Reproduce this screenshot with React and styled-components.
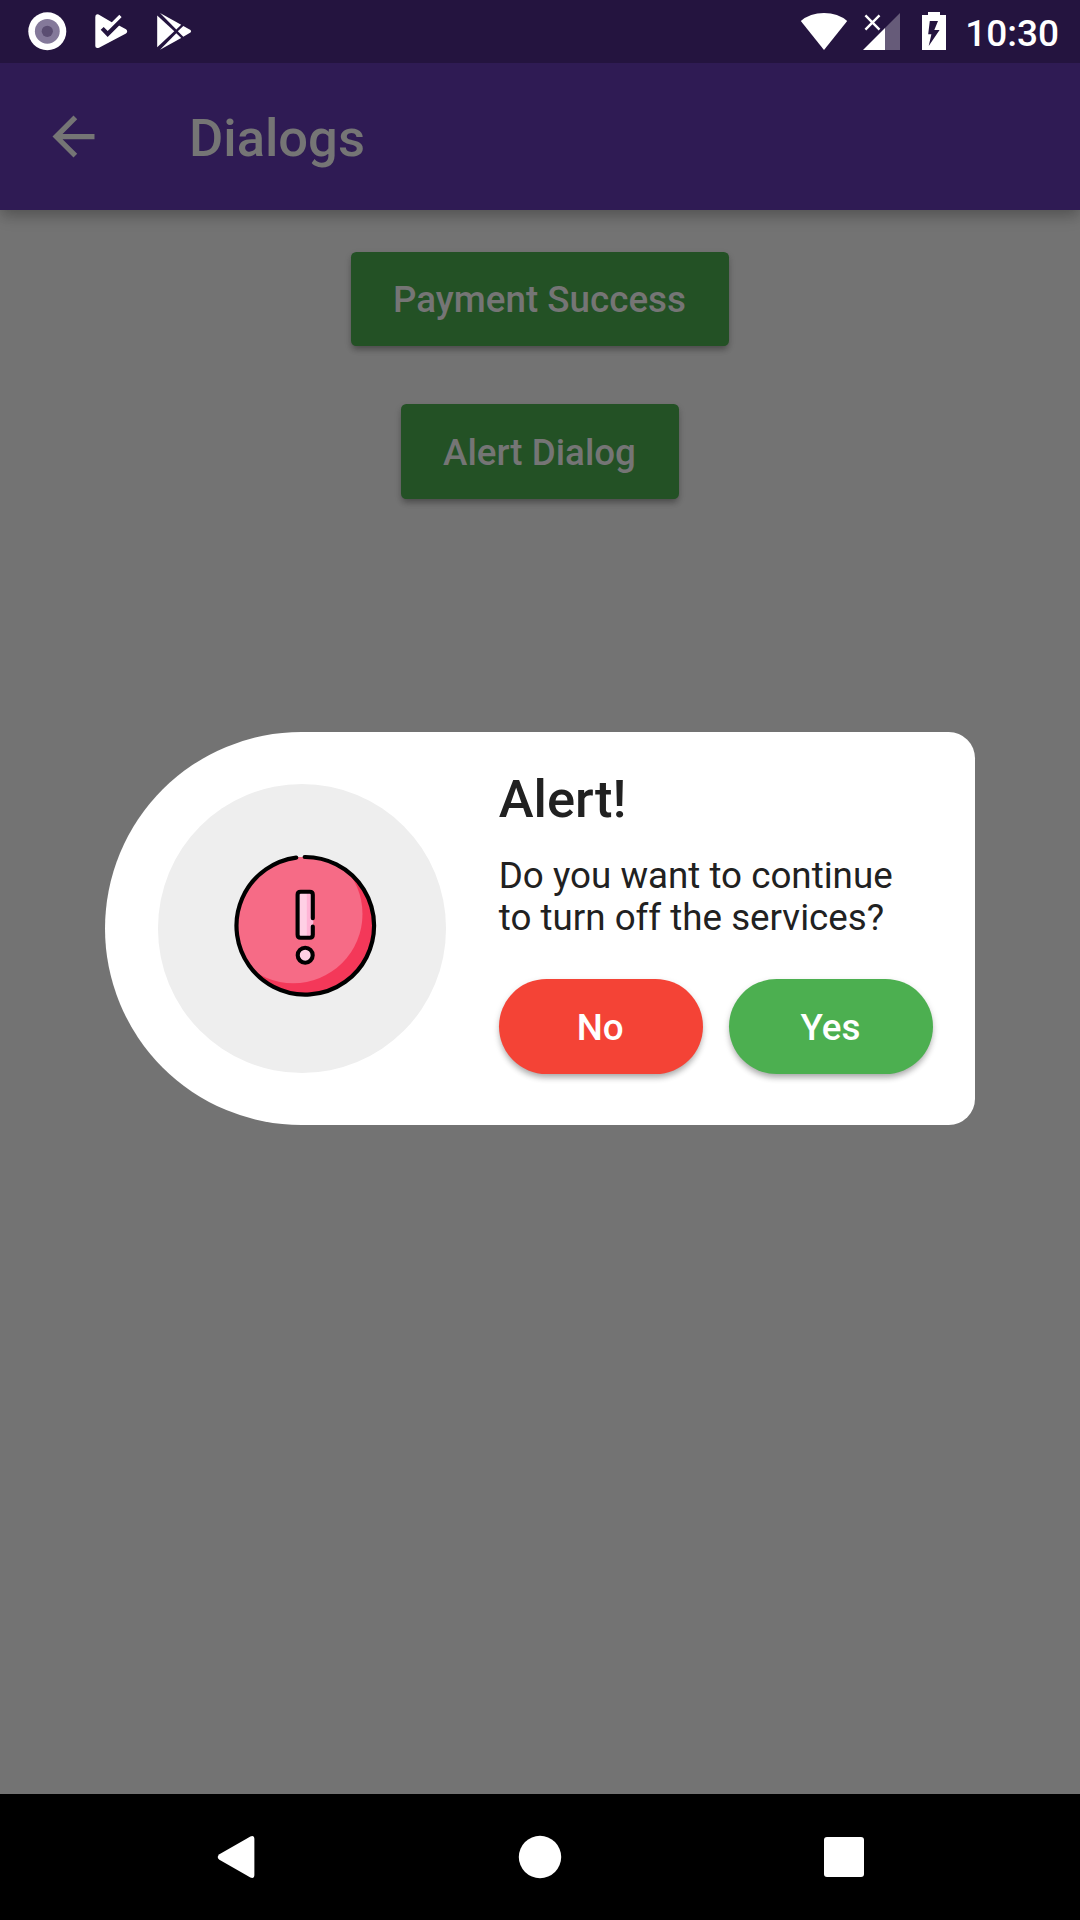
import React from "react";
import styled, { createGlobalStyle } from "styled-components";

const GlobalStyle = createGlobalStyle`
  html, body { margin: 0; padding: 0; }
  *, *::before, *::after { box-sizing: border-box; }
`;

const Screen = styled.div`
  position: relative;
  display: flex;
  flex-direction: column;
  width: 1080px;
  height: 1920px;
  overflow: hidden;
  background: #737373;
  font-family: Roboto, "Liberation Sans", sans-serif;
`;

const StatusBar = styled.div`
  display: flex;
  align-items: center;
  flex: none;
  height: 63px;
  padding: 0 21px 0 28px;
  background: #24143f;
  z-index: 1;
`;

const StatusIcon = styled.svg`
  flex: none;
  display: block;
  width: ${(p) => p.$w}px;
  height: 63px;
  margin-right: ${(p) => p.$gap || 0}px;
`;

const Spacer = styled.div`
  flex: 1;
`;

const Clock = styled.span`
  color: #fff;
  font-size: 37px;
  font-weight: 500;
  line-height: 63px;
  padding-top: 2px;
  height: 63px;
`;

const AppBar = styled.header`
  display: flex;
  align-items: center;
  flex: none;
  height: 147px;
  padding-left: 42px;
  gap: 84px;
  background: #2f1b54;
  box-shadow: 0 9px 14px -2px rgba(0, 0, 0, 0.18), 0 3px 12px rgba(0, 0, 0, 0.12);
`;

const BackIcon = styled.svg`
  width: 63px;
  height: 63px;
`;

const Title = styled.h1`
  margin: 0;
  padding-top: 3px;
  color: #757575;
  font-size: 52.5px;
  font-weight: 500;
  line-height: 62px;
`;

const Body = styled.main`
  display: flex;
  flex-direction: column;
  align-items: center;
  flex: 1;
  gap: 58px;
  padding-top: 42px;
`;

const RaisedButton = styled.button`
  height: 94px;
  padding: 0 1px 0 0;
  width: ${(p) => p.$width}px;
  border: 0;
  border-radius: 5.25px;
  background: #235125;
  color: #757575;
  font: 500 36.75px/43px Roboto, "Liberation Sans", sans-serif;
  box-shadow: 0 5px 6px -2px rgba(0, 0, 0, 0.24), 0 3px 7px rgba(0, 0, 0, 0.16);

  &:last-child {
    height: 95px;
    padding-top: 1px;
  }
`;

const DialogLayer = styled.div`
  position: absolute;
  inset: 63px 0 126px;
  display: flex;
  align-items: center;
  justify-content: center;
`;

const Dialog = styled.section`
  display: flex;
  align-items: center;
  width: 870px;
  height: 393.75px;
  padding: 0 42px 0 52.5px;
  gap: 52.5px;
  background: #fff;
  border-radius: 196.875px 26.25px 26.25px 196.875px;
`;

const IconDisc = styled.div`
  display: flex;
  align-items: center;
  justify-content: center;
  flex: none;
  width: 288.75px;
  height: 288.75px;
  border-radius: 50%;
  background: #eee;
`;

const AlertSvg = styled.svg`
  width: 170px;
  height: 170px;
`;

const Content = styled.div`
  display: flex;
  flex-direction: column;
  align-self: flex-start;
  flex: 1;
  padding-top: 36.4px;
  color: #212121;
`;

const Heading = styled.h2`
  margin: 0 0 25px;
  font-size: 52.5px;
  font-weight: 500;
  line-height: 62px;
`;

const Message = styled.p`
  margin: 0 0 40.4px;
  font-size: 36.75px;
  line-height: 42px;
  white-space: nowrap;
`;

const Actions = styled.div`
  display: flex;
  gap: 26.25px;
`;

const PillButton = styled.button`
  flex: 1;
  height: 94.5px;
  padding: 1px 1px 0 0;
  border: 0;
  border-radius: 48px;
  background: ${(p) => p.$color};
  color: #fff;
  font: 500 36.75px/43px Roboto, "Liberation Sans", sans-serif;
  box-shadow: 0 5px 6px -2px rgba(0, 0, 0, 0.24), 0 3px 7px rgba(0, 0, 0, 0.16);
`;

const NavBar = styled.nav`
  display: flex;
  align-items: center;
  justify-content: center;
  flex: none;
  gap: 240px;
  height: 126px;
  background: #000;
`;

const NavIcon = styled.svg`
  width: 64px;
  height: 64px;
`;

export default function App() {
  return (
    <Screen>
      <GlobalStyle />
      <StatusBar>
        <StatusIcon $w={39} $gap={27} viewBox="28 0 39 63">
          <circle cx="47.3" cy="31.3" r="19" fill="#fff" />
          <circle cx="47.3" cy="31.3" r="12.4" fill="#84799a" />
          <circle cx="47.3" cy="31.3" r="5.6" fill="#5b4e72" />
        </StatusIcon>
        <StatusIcon $w={36} $gap={26} viewBox="94 0 36 63">
          <path
            d="M95.3 17Q95.3 13.4 98.6 14.6L111.8 22.2L119.3 14.8L122 17.4L119 25.6L126 29.2Q128.4 31.4 126 33.6L99 47.8Q95.3 48.8 95.3 46Z"
            fill="#fff"
          />
          <path d="M102.2 28.4L107.7 34L124 17.8" fill="none" stroke="#24143f" strokeWidth="4.2" />
        </StatusIcon>
        <StatusIcon $w={38} viewBox="156 0 38 63">
          <g fill="#fff">
            <path d="M157.2 15.4L174.3 31.3L157.2 47.2Z" />
            <path d="M160 13L181.2 24.7L176.3 29.4Z" />
            <path d="M160 49.8L181.2 38L176.3 33.2Z" />
            <path d="M183.3 25.9L190.5 30Q191.8 31.3 190.5 32.6L183.3 36.8L177.8 31.3Z" />
          </g>
        </StatusIcon>
        <Spacer />
        <StatusIcon $w={48} $gap={14} viewBox="800 0 48 63">
          <path d="M800.8 21Q810 13 824 13Q838 13 847.2 21L824 50Z" fill="#fff" />
        </StatusIcon>
        <StatusIcon $w={39} $gap={20} viewBox="862 0 39 63">
          <path d="M863 50L885 28V50Z" fill="#fff" />
          <path d="M885 28L900 13V50H885Z" fill="#665b79" />
          <path d="M865.4 15.4L879.5 29.7M879.5 15.4L865.4 29.7" stroke="#fff" strokeWidth="2.4" />
        </StatusIcon>
        <StatusIcon $w={26} $gap={18} viewBox="921 0 26 63">
          <path d="M922 15H928V12H940V15H946V50H922Z" fill="#fff" />
          <path d="M929.8 21H938L934.3 30H939.6L928.7 46L931.4 34.3H928.2Z" fill="#24143f" />
        </StatusIcon>
        <Clock>10:30</Clock>
      </StatusBar>
      <AppBar>
        <BackIcon viewBox="0 0 24 24">
          <path d="M20 11H7.83l5.59-5.59L12 4l-8 8 8 8 1.41-1.41L7.83 13H20v-2z" fill="#757575" />
        </BackIcon>
        <Title>Dialogs</Title>
      </AppBar>
      <Body>
        <RaisedButton $width={378}>Payment Success</RaisedButton>
        <RaisedButton $width={278}>Alert Dialog</RaisedButton>
      </Body>
      <NavBar>
        <NavIcon viewBox="204 1825 64 64">
          <path
            d="M254.4 1839V1875Q254.2 1879 250.4 1877.5L219.4 1859.8Q216 1857 219.4 1854.2L250.4 1836.5Q254.2 1835 254.4 1839Z"
            fill="#fff"
          />
        </NavIcon>
        <NavIcon viewBox="0 0 64 64">
          <circle cx="32" cy="32" r="21.2" fill="#fff" />
        </NavIcon>
        <NavIcon viewBox="0 0 64 64">
          <rect x="12" y="12" width="40" height="40" rx="3" fill="#fff" />
        </NavIcon>
      </NavBar>
      <DialogLayer>
        <Dialog>
          <IconDisc>
            <AlertSvg viewBox="217 844 170 170">
              <defs>
                <clipPath id="face">
                  <circle cx="305.2" cy="925.8" r="68.8" />
                </clipPath>
              </defs>
              <circle cx="305.2" cy="925.8" r="68.8" fill="#f43859" />
              <circle cx="293.2" cy="914" r="69.3" fill="#f66b86" clipPath="url(#face)" />
              <path
                d="M304.7 857A68.8 68.8 0 1 1 296.2 857.6"
                fill="none"
                stroke="#000"
                strokeWidth="4.2"
                strokeLinecap="round"
              />
              <rect x="297.6" y="891.7" width="15.2" height="46.2" rx="2.2" fill="#ffd0e5" />
              <path d="M306.8 893H311L312.8 919.3Q314 922 312.8 924.5V936H306.8Z" fill="#ffb5d6" />
              <path
                d="M312.8 918.2V894.7Q312.8 891.7 309.8 891.7H300.6Q297.6 891.7 297.6 894.7V934.7Q297.6 937.7 300.6 937.7H309.8Q312.8 937.7 312.8 934.7V926.6"
                fill="none"
                stroke="#000"
                strokeWidth="4.1"
                strokeLinecap="round"
              />
              <circle cx="305.2" cy="955.2" r="7.5" fill="#ffd0e5" stroke="#000" strokeWidth="4.1" />
            </AlertSvg>
          </IconDisc>
          <Content>
            <Heading>Alert!</Heading>
            <Message>
              Do you want to continue
              <br />
              to turn off the services?
            </Message>
            <Actions>
              <PillButton $color="#f44336">No</PillButton>
              <PillButton $color="#4caf50">Yes</PillButton>
            </Actions>
          </Content>
        </Dialog>
      </DialogLayer>
    </Screen>
  );
}
